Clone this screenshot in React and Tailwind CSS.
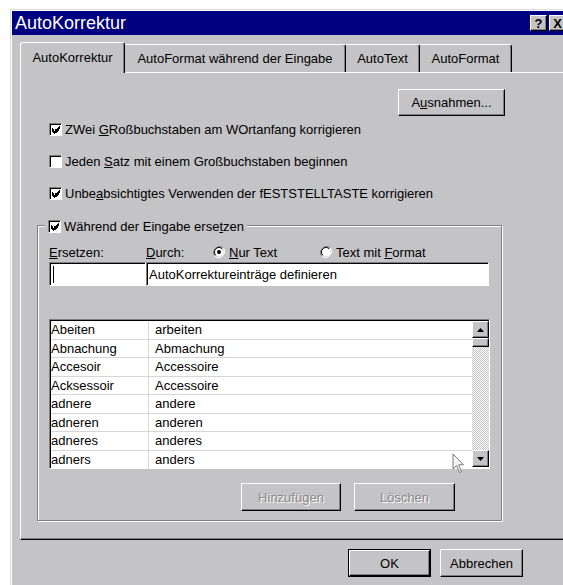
const raised =
  'border border-t-white border-l-white border-r-black border-b-black shadow-[inset_-1px_-1px_0_#808080]';
const sunken =
  'border border-t-[#808080] border-l-[#808080] border-r-white border-b-white shadow-[inset_1px_1px_0_#000]';

// 7x7 pixel tick used by the checkboxes
const Check = ({ checked }) => (
  <span className={`relative flex items-center justify-center w-[13px] h-[13px] bg-white shrink-0 ${sunken}`}>
    {checked && (
      <svg width="8" height="8" viewBox="0 0 7 7" shapeRendering="crispEdges" className="ml-[1px] mt-[1px]">
        <rect x="0" y="2" width="1" height="3" />
        <rect x="1" y="3" width="1" height="3" />
        <rect x="2" y="4" width="1" height="3" />
        <rect x="3" y="3" width="1" height="3" />
        <rect x="4" y="2" width="1" height="3" />
        <rect x="5" y="1" width="1" height="3" />
        <rect x="6" y="0" width="1" height="3" />
      </svg>
    )}
  </span>
);

const Radio = ({ selected }) => (
  <svg width="12" height="12" viewBox="0 0 12 12" className="shrink-0">
    <path d="M10.2 1.8A6 6 0 0 0 1.8 10.2" fill="none" stroke="#808080" strokeWidth="1" />
    <path d="M1.8 10.2A6 6 0 0 0 10.2 1.8" fill="none" stroke="#fff" strokeWidth="1" />
    <circle cx="6" cy="6" r="4.6" fill="#fff" />
    <path d="M9.2 2.8A4.5 4.5 0 0 0 2.8 9.2" fill="none" stroke="#000" strokeWidth="1" />
    {selected && <circle cx="6" cy="6" r="2" fill="#000" />}
  </svg>
);

const entries = [
  ['Abeiten', 'arbeiten'],
  ['Abnachung', 'Abmachung'],
  ['Accesoir', 'Accessoire'],
  ['Acksessoir', 'Accessoire'],
  ['adnere', 'andere'],
  ['adneren', 'anderen'],
  ['adneres', 'anderes'],
  ['adners', 'anders'],
];

const tabs = [
  { label: 'AutoFormat während der Eingabe', w: 'w-[221px]' },
  { label: 'AutoText', w: 'w-[74px]' },
  { label: 'AutoFormat', w: 'w-[92px]' },
];

export default function App() {
  return (
    <div className="w-[563px] h-[585px] overflow-hidden bg-white pt-[9px] pl-[10px] font-['Liberation_Sans',Arial,sans-serif] text-[13px] text-black leading-none">
      <div className="w-[600px] h-[620px] bg-[#c4c3c6] border-t border-l border-[#dcdcdc]">
        <div className="h-full border-t border-l border-white">
          {/* title bar */}
          <div className="h-[24px] bg-[#000080] flex items-center text-white">
            <span className="w-[518px] pl-[3px] text-[18px]">AutoKorrektur</span>
            <div className="flex gap-[2px]">
              <span className={`w-[17px] h-[16px] bg-[#c4c3c6] text-black font-bold text-[13px] flex items-center justify-center ${raised}`}>?</span>
              <span className={`w-[17px] h-[16px] bg-[#c4c3c6] text-black font-bold text-[13px] flex items-center justify-center ${raised}`}>X</span>
            </div>
          </div>

          {/* tabs */}
          <div className="mt-[7px] pl-[8px] h-[30px] flex items-end">
            <div className="relative z-10 -mb-[1px] w-[105px] h-[31px] bg-[#c4c3c6] border-t border-l border-r border-t-white border-l-white border-r-black rounded-t-[3px] shadow-[inset_-1px_0_0_#808080] flex items-center justify-center pb-[2px]">
              AutoKorrektur
            </div>
            {tabs.map((t) => (
              <div
                key={t.label}
                className={`${t.w} h-[28px] border-t border-r border-t-white border-r-black rounded-tr-[3px] shadow-[inset_-1px_0_0_#808080] flex items-center justify-center`}
              >
                {t.label}
              </div>
            ))}
          </div>

          {/* tab page */}
          <div className="ml-[8px] h-[468px] border-t border-l border-b border-t-white border-l-white border-b-black shadow-[inset_0_-1px_0_#808080] flex flex-col">
            <button className={`ml-[377px] mt-[16px] w-[107px] h-[27px] flex items-center justify-center ${raised}`}>
              A<u>u</u>snahmen...
            </button>

            <div className="ml-[28px] mt-[3px] flex flex-col gap-[12px]">
              <label className="h-[20px] flex items-center gap-[3px]">
                <Check checked />
                <span>ZWei <u>G</u>Roßbuchstaben am WOrtanfang korrigieren</span>
              </label>
              <label className="h-[20px] flex items-center gap-[3px]">
                <Check />
                <span>Jeden <u>S</u>atz mit einem Großbuchstaben beginnen</span>
              </label>
              <label className="h-[20px] flex items-center gap-[3px]">
                <Check checked />
                <span>Unbe<u>a</u>bsichtigtes Verwenden der fESTSTELLTASTE korrigieren</span>
              </label>
            </div>

            {/* replace-as-you-type group */}
            <div className="relative ml-[16px] mt-[22px] w-[465px] h-[296px] border border-[#808080] shadow-[1px_1px_0_#fff,inset_1px_1px_0_#fff] flex flex-col pl-[11px] pt-[18px]">
              <label className="absolute left-[7px] -top-[10px] h-[20px] px-[3px] bg-[#c4c3c6] flex items-center gap-[3px]">
                <Check checked />
                <span>Während der Eingabe erse<u>t</u>zen</span>
              </label>

              <div className="h-[16px] flex items-center">
                <span className="w-[97px]"><u>E</u>rsetzen:</span>
                <span className="w-[67px]"><u>D</u>urch:</span>
                <span className="w-[107px] flex items-center gap-[4px]">
                  <Radio selected />
                  <span><u>N</u>ur Text</span>
                </span>
                <span className="flex items-center gap-[4px]">
                  <Radio />
                  <span>Text mit <u>F</u>ormat</span>
                </span>
              </div>

              <div className="mt-[2px] flex">
                <div className={`w-[97px] h-[24px] bg-white flex items-center pl-[3px] ${sunken}`}>
                  <span className="w-[1px] h-[17px] bg-black" />
                </div>
                <div className={`w-[343px] h-[24px] bg-white flex items-center pl-[2px] ${sunken}`}>
                  AutoKorrektureinträge definieren
                </div>
              </div>

              {/* entries list */}
              <div className={`relative mt-[33px] w-[441px] h-[150px] bg-white flex ${sunken}`}>
                <div className="flex-1 pt-[1px] pl-[1px]">
                  {entries.map(([from, to], i) => (
                    <div
                      key={from}
                      className={`h-[18.5px] flex items-center ${i < entries.length - 1 ? 'border-b border-[#d6d6d6]' : ''}`}
                    >
                      <span className="w-[98px] h-full flex items-center border-r border-[#d6d6d6]">{from}</span>
                      <span className="pl-[6px]">{to}</span>
                    </div>
                  ))}
                </div>

                <div className="w-[17px] mt-[1px] mb-[1px] flex flex-col bg-[repeating-conic-gradient(#c4c3c6_0_25%,#ffffff_0_50%)] bg-[length:2px_2px]">
                  <div className={`h-[17px] bg-[#c4c3c6] flex items-center justify-center ${raised}`}>
                    <svg width="7" height="4" viewBox="0 0 7 4"><path d="M3.5 0L7 4H0Z" /></svg>
                  </div>
                  <div className={`h-[9px] bg-[#c4c3c6] ${raised}`} />
                  <div className="flex-1" />
                  <div className={`h-[17px] bg-[#c4c3c6] flex items-center justify-center ${raised}`}>
                    <svg width="7" height="4" viewBox="0 0 7 4"><path d="M0 0H7L3.5 4Z" /></svg>
                  </div>
                </div>

                {/* mouse pointer */}
                <svg className="absolute left-[402px] top-[133px]" width="14" height="21" viewBox="0 0 14 21">
                  <path
                    d="M1 1V16L4.5 12.5L7.5 19.5L9.5 18.6L6.6 11.8H11.5Z"
                    fill="#f4f4f4"
                    stroke="#7a7a7a"
                    strokeWidth="1"
                    strokeLinejoin="miter"
                  />
                </svg>
              </div>

              <div className="mt-[14px] flex">
                <button className={`ml-[192px] w-[100px] h-[28px] flex items-center justify-center text-[#8a8a8a] [text-shadow:1px_1px_0_#fff] ${raised}`}>
                  Hinzufügen
                </button>
                <button className={`ml-[13px] w-[101px] h-[28px] flex items-center justify-center text-[#8a8a8a] [text-shadow:1px_1px_0_#fff] ${raised}`}>
                  Löschen
                </button>
              </div>
            </div>
          </div>

          {/* dialog buttons */}
          <div className="mt-[9px] flex">
            <div className="ml-[336px] w-[83px] h-[28px] border border-black">
              <button className={`w-full h-full flex items-center justify-center ${raised}`}>OK</button>
            </div>
            <button className={`ml-[9px] w-[83px] h-[28px] flex items-center justify-center ${raised}`}>
              Abbrechen
            </button>
          </div>
        </div>
      </div>
    </div>
  );
}
